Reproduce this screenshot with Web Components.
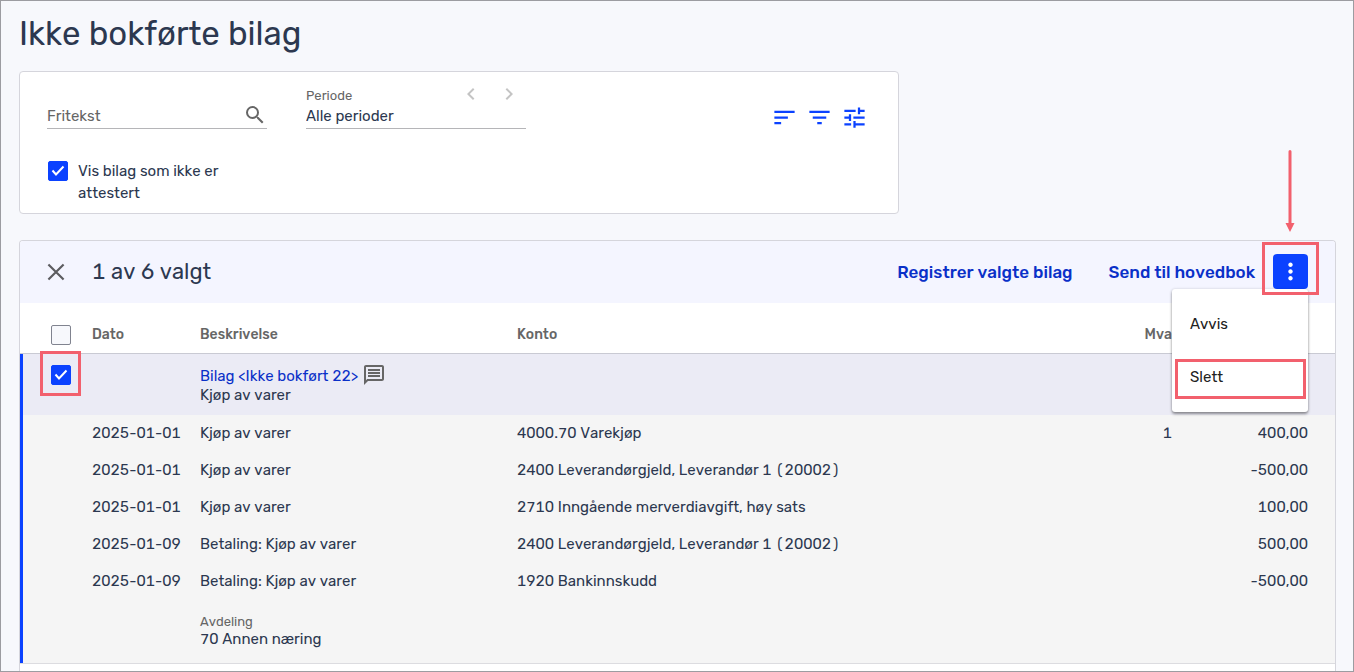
<!DOCTYPE html>
<html lang="nb">
<head>
<meta charset="utf-8">
<meta name="viewport" content="width=device-width, initial-scale=1">
<title>Ikke bokførte bilag</title>
<style>
html {
    --blue: #0b42ff;
    --blue-text: #0a30c8;
    --gray: #666666;
    --line: #d5d5dc;
    --mark: #f2606d;
    font-family: Rubik, Inter, "Liberation Sans", sans-serif;
    font-size: 15px;
    line-height: 19px;
    font-kerning: none;
    font-variant-numeric: tabular-nums;
    color: #2c3850;
}

body {
    margin: 0;
}
</style>
</head>
<body>

<voucher-page>
    <h1 slot="title">Ikke bokførte bilag</h1>
    <voucher-filter></voucher-filter>
    <voucher-list>
        <selection-bar slot="toolbar" selected="1" total="6"></selection-bar>
        <voucher-table></voucher-table>
    </voucher-list>
</voucher-page>

<script>
const define = (name, html, setup) => {
    const template = document.createElement('template');
    template.innerHTML = html;

    window.customElements.define(name, class extends HTMLElement {
        constructor() {
            super();

            this.attachShadow({mode: 'open'})
            this.shadowRoot.appendChild(template.content.cloneNode(true))

            if (setup) setup(this, this.shadowRoot)
        }
    })
}

const icons = {
    search: '<path d="M15.5 14h-.79l-.28-.27A6.471 6.471 0 0 0 16 9.5 6.5 6.5 0 1 0 9.5 16c1.61 0 3.09-.59 4.23-1.57l.27.28v.79l5 4.99L20.49 19l-4.99-5zm-6 0C7.01 14 5 11.99 5 9.5S7.01 5 9.5 5 14 7.01 14 9.5 11.99 14 9.5 14z"/>',
    left: '<path d="M15.41 7.41 14 6l-6 6 6 6 1.41-1.41L10.83 12z"/>',
    right: '<path d="M10 6 8.59 7.41 13.17 12l-4.58 4.59L10 18l6-6z"/>',
    sort: '<path d="M3 18h6v-2H3v2zM3 6v2h18V6H3zm0 7h12v-2H3v2z"/>',
    filter: '<path d="M10 18h4v-2h-4v2zM3 6v2h18V6H3zm3 7h12v-2H6v2z"/>',
    tune: '<path d="M3 17v2h6v-2H3zM3 5v2h10V5H3zm10 16v-2h8v-2h-8v-2h-2v6h2zM7 9v2H3v2h4v2h2V9H7zm14 4v-2H11v2h10zm-6-4h2V7h4V5h-4V3h-2v6z"/>',
    close: '<path d="m5 5 14 14M19 5 5 19" fill="none" stroke="currentColor" stroke-width="2"/>',
    more: '<path d="M12 8c1.1 0 2-.9 2-2s-.9-2-2-2-2 .9-2 2 .9 2 2 2zm0 2c-1.1 0-2 .9-2 2s.9 2 2 2 2-.9 2-2-.9-2-2-2zm0 6c-1.1 0-2 .9-2 2s.9 2 2 2 2-.9 2-2-.9-2-2-2z"/>',
    comment: '<path d="M4 4h16v12H5.17L4 17.17V4m0-2c-1.1 0-1.99.9-1.99 2L2 22l4-4h14c1.1 0 2-.9 2-2V4c0-1.1-.9-2-2-2H4zm2 10h12v2H6v-2zm0-3h12v2H6V9zm0-3h12v2H6V6z"/>'
}

define('ui-icon', `
<style>
:host {
    display: inline-block;
    flex: none;
    width: 24px;
    height: 24px;
}

svg {
    display: block;
    width: 100%;
    height: 100%;
    fill: currentColor;
}
</style>
<svg viewBox="0 0 24 24" aria-hidden="true"></svg>
`, (host, root) => {
    root.querySelector('svg').innerHTML = icons[host.getAttribute('name')]
})

define('check-box', `
<style>
:host {
    display: block;
}

label {
    display: flex;
    align-items: flex-start;
    gap: 9px;
    line-height: 22px;
}

.box {
    display: grid;
    flex: none;
    margin: 1px;
    width: 20px;
    height: 20px;
}

input,
svg {
    grid-area: 1 / 1;
    width: 20px;
    height: 20px;
    margin: 0;
    box-sizing: border-box;
}

input {
    appearance: none;
    border: 1px solid #80838f;
    border-radius: 2px;
    background: #f7f8fc;
}

input:checked {
    border-color: var(--blue);
    background: var(--blue);
}

svg {
    fill: none;
    stroke: #ffffff;
    stroke-width: 2;
    pointer-events: none;
}

input:not(:checked) + svg {
    display: none;
}
</style>
<label>
    <span class="box">
        <input type="checkbox">
        <svg viewBox="0 0 20 20" aria-hidden="true"><path d="m4.500 9.500 3.500 4 7.500-8"/></svg>
    </span>
    <slot></slot>
</label>
`, (host, root) => {
    const input = root.querySelector('input')
    input.checked = host.hasAttribute('checked')
    if (host.hasAttribute('label')) input.setAttribute('aria-label', host.getAttribute('label'))
})

/* Red frame drawn around the slotted control, --mark-inset sets how far out it sits */
define('mark-frame', `
<style>
:host {
    display: block;
    position: relative;
}

.frame {
    position: absolute;
    inset: var(--mark-inset);
    z-index: 3;
    border: 3px solid var(--mark);
    pointer-events: none;
}

.arrow {
    display: none;
    position: absolute;
    left: 50%;
    bottom: 100%;
    width: 12px;
    height: 82px;
    margin: 0 0 13px -7px;
    fill: var(--mark);
}

:host([arrow]) .arrow {
    display: block;
}
</style>
<slot></slot>
<div class="frame">
    <svg class="arrow" viewBox="0 0 12 82" aria-hidden="true"><path d="M4.500 1.500a1.500 1.500 0 0 1 3 0V73H10.500L6 82 1.500 73h3z"/></svg>
</div>
`)

define('voucher-page', `
<style>
:host {
    display: flex;
    flex-direction: column;
    box-sizing: border-box;
    min-height: 100vh;
    padding: 13px 17px 0 18px;
    border: 1px solid #9c9ca1;
    background: #f7f8fc;
}

::slotted(h1) {
    margin: 0 0 17px;
    font-size: 33px;
    line-height: 40px;
    font-weight: 400;
}
</style>
<slot name="title"></slot>
<slot></slot>
`)

define('voucher-filter', `
<style>
:host {
    display: block;
    box-sizing: border-box;
    width: 67%;
    min-width: 760px;
    max-width: 880px;
    margin-bottom: 26px;
    padding: 13px 30px 9px 27px;
    border: 1px solid var(--line);
    border-radius: 4px;
    background: #ffffff;
}

.filter__row {
    display: flex;
    align-items: flex-end;
    gap: 39px;
}

.field {
    width: 220px;
}

.field__head {
    display: flex;
    align-items: center;
    height: 18px;
    font-size: 13px;
    color: var(--gray);
}

.field__head label {
    flex: 1;
    padding-top: 2px;
}

.field__head button {
    display: grid;
    place-content: center;
    width: 34px;
    height: 18px;
    margin-left: 4px;
    color: #c4c4c4;
}

.field__body {
    display: flex;
    height: 25px;
    border-bottom: 1px solid #b5b5b8;
}

input,
select {
    flex: 1;
    min-width: 0;
    padding: 2px 0 0;
    border: 0;
    background: none;
    font: inherit;
    font-kerning: inherit;
    color: inherit;
    appearance: none;
    outline: none;
}

input::placeholder {
    color: var(--gray);
    opacity: 1;
}

button {
    padding: 0;
    border: 0;
    background: none;
    color: var(--blue);
}

.search {
    display: block;
    height: 24px;
    color: var(--gray);
}

.filter__actions {
    display: flex;
    gap: 8px;
    margin-left: auto;
}

.filter__actions button {
    display: grid;
    place-content: center;
    width: 27px;
    height: 24px;
}

.filter__actions ui-icon {
    width: 27px;
    height: 27px;
}

check-box {
    width: 190px;
    margin-top: 31px;
}
</style>
<div class="filter__row">
    <div class="field">
        <div class="field__body">
            <input type="text" placeholder="Fritekst" aria-label="Fritekst">
            <button class="search" aria-label="Søk"><ui-icon name="search"></ui-icon></button>
        </div>
    </div>
    <div class="field">
        <div class="field__head">
            <label for="period">Periode</label>
            <button aria-label="Forrige"><ui-icon name="left"></ui-icon></button>
            <button aria-label="Neste"><ui-icon name="right"></ui-icon></button>
        </div>
        <div class="field__body">
            <select id="period"><option>Alle perioder</option></select>
        </div>
    </div>
    <div class="filter__actions">
        <button aria-label="Sorter"><ui-icon name="sort"></ui-icon></button>
        <button aria-label="Filtrer"><ui-icon name="filter"></ui-icon></button>
        <button aria-label="Innstillinger"><ui-icon name="tune"></ui-icon></button>
    </div>
</div>
<check-box checked>Vis bilag som ikke er attestert</check-box>
`)

define('voucher-list', `
<style>
:host {
    display: block;
    flex: 1;
    border: 1px solid var(--line);
    border-bottom: 0;
    border-radius: 4px 4px 0 0;
    background: #ffffff;
}
</style>
<slot name="toolbar"></slot>
<slot></slot>
`)

define('overflow-menu', `
<style>
:host {
    display: block;
    position: relative;
}

.toggle {
    display: grid;
    place-content: center;
    width: 35px;
    height: 35px;
    padding: 0;
    border: 0;
    border-radius: 4px;
    background: var(--blue);
    color: #ffffff;
}

.toggle ui-icon {
    width: 27px;
    height: 27px;
}

.menu {
    position: absolute;
    top: 100%;
    right: 0;
    z-index: 2;
    box-sizing: border-box;
    width: 136px;
    padding: 8px 0 9px;
    border-radius: 3px;
    background: #ffffff;
    box-shadow: 0 2px 3px rgba(0, 0, 0, .4), 0 0 3px rgba(0, 0, 0, .14);
}

::slotted(mark-frame) {
    --mark-inset: 9px 2px 4px 3px;
}

.around {
    --mark-inset: -12px -11px -6px -11px;
}
</style>
<mark-frame class="around" arrow>
    <button class="toggle" aria-label="Flere valg" aria-expanded="true"><ui-icon name="more"></ui-icon></button>
</mark-frame>
<div class="menu" role="menu">
    <slot></slot>
</div>
`)

define('menu-item', `
<style>
:host {
    display: block;
}

button {
    display: block;
    width: 100%;
    height: 53px;
    padding: 2px 18px 0;
    border: 0;
    background: none;
    font: inherit;
    font-kerning: inherit;
    color: #222222;
    text-align: left;
}
</style>
<button role="menuitem"><slot></slot></button>
`)

define('selection-bar', `
<style>
:host {
    display: flex;
    align-items: center;
    height: 62px;
    padding: 0 27px 0 23px;
    border-radius: 3px 3px 0 0;
    background: #f4f5ff;
}

button {
    padding: 0;
    border: 0;
    background: none;
    font: inherit;
    font-kerning: inherit;
}

.close {
    display: block;
    height: 26px;
    color: #5c5c60;
}

.close ui-icon {
    width: 26px;
    height: 26px;
}

.count {
    flex: 1;
    margin: 0 0 0 23px;
    font-size: 22px;
    line-height: 28px;
    font-weight: 400;
}

.action {
    margin-right: 36px;
    font-size: 17px;
    font-weight: 500;
    color: var(--blue-text);
}

.action:last-of-type {
    margin-right: 18px;
}

overflow-menu {
    margin-bottom: 2px;
}
</style>
<button class="close" aria-label="Fjern valg"><ui-icon name="close"></ui-icon></button>
<h2 class="count"></h2>
<button class="action">Registrer valgte bilag</button>
<button class="action">Send til hovedbok</button>
<overflow-menu>
    <menu-item>Avvis</menu-item>
    <mark-frame><menu-item>Slett</menu-item></mark-frame>
</overflow-menu>
`, (host, root) => {
    root.querySelector('.count').textContent = `${host.getAttribute('selected')} av ${host.getAttribute('total')} valgt`
})

const lines = [
    ['2025-01-01', 'Kjøp av varer', '4000.70 Varekjøp', '1', '400,00'],
    ['2025-01-01', 'Kjøp av varer', '2400 Leverandørgjeld, Leverandør 1 (20002)', '', '-500,00'],
    ['2025-01-01', 'Kjøp av varer', '2710 Inngående merverdiavgift, høy sats', '', '100,00'],
    ['2025-01-09', 'Betaling: Kjøp av varer', '2400 Leverandørgjeld, Leverandør 1 (20002)', '', '500,00'],
    ['2025-01-09', 'Betaling: Kjøp av varer', '1920 Bankinnskudd', '', '-500,00']
]

define('voucher-table', `
<style>
:host {
    display: block;
}

table {
    width: 100%;
    border-collapse: collapse;
    table-layout: fixed;
}

.col-check { width: 72px; }
.col-date { width: 108px; }
.col-text { width: 317px; }
.col-vat { width: 100px; }
.col-sum { width: 163px; }

th,
td {
    padding: 9px 0;
    text-align: left;
    vertical-align: top;
}

th {
    padding: 21px 0 7px;
    font-size: 14px;
    line-height: 22px;
    font-weight: 500;
    color: var(--gray);
}

thead tr {
    border-bottom: 1px solid #c9cad3;
}

tbody {
    background: #f5f5f5;
}

tbody tr:last-child {
    border-bottom: 1px solid #dcdce0;
}

td:first-child {
    box-shadow: inset 3px 0 var(--blue);
}

th:nth-child(n + 5),
td:nth-child(n + 5) {
    text-align: right;
}

th:last-child,
td:last-child {
    padding-right: 27px;
}

th:first-child,
td:first-child {
    padding-left: 30px;
}

.selected td {
    padding: 13px 0 10px;
    background: #ebebf5;
}

.selected td:first-child {
    padding: 10px 0 0 30px;
}

.selected a {
    color: var(--blue-text);
    text-decoration: none;
}

.selected ui-icon {
    height: 24px;
    margin: -4px 0;
    color: var(--gray);
}

.head {
    display: flex;
    gap: 4px;
    height: 19px;
}

.extra td {
    padding: 13px 0 14px;
}

.extra small {
    display: block;
    font-size: 13px;
    line-height: 17px;
    color: var(--gray);
}

mark-frame {
    width: 22px;
    --mark-inset: -13px -9px -10px -10px;
}
</style>
<table>
    <colgroup>
        <col class="col-check"><col class="col-date"><col class="col-text"><col><col class="col-vat"><col class="col-sum">
    </colgroup>
    <thead>
        <tr>
            <th scope="col"><check-box label="Velg alle"></check-box></th>
            <th scope="col">Dato</th>
            <th scope="col">Beskrivelse</th>
            <th scope="col">Konto</th>
            <th scope="col">Mva</th>
            <th scope="col" aria-label="Beløp"></th>
        </tr>
    </thead>
    <tbody>
        <tr class="selected">
            <td><mark-frame><check-box label="Velg bilag 22" checked></check-box></mark-frame></td>
            <td></td>
            <td colspan="4">
                <div class="head"><a href="#bilag-22">Bilag &lt;Ikke bokført 22&gt;</a><ui-icon name="comment"></ui-icon></div>
                Kjøp av varer
            </td>
        </tr>
        <tr class="extra">
            <td></td>
            <td></td>
            <td colspan="4"><small>Avdeling</small>70 Annen næring</td>
        </tr>
    </tbody>
</table>
`, (host, root) => {
    const extra = root.querySelector('.extra')

    for (const line of lines) {
        const row = document.createElement('tr')
        row.insertCell()
        for (const text of line) row.insertCell().textContent = text
        extra.before(row)
    }
})
</script>
</body>
</html>
